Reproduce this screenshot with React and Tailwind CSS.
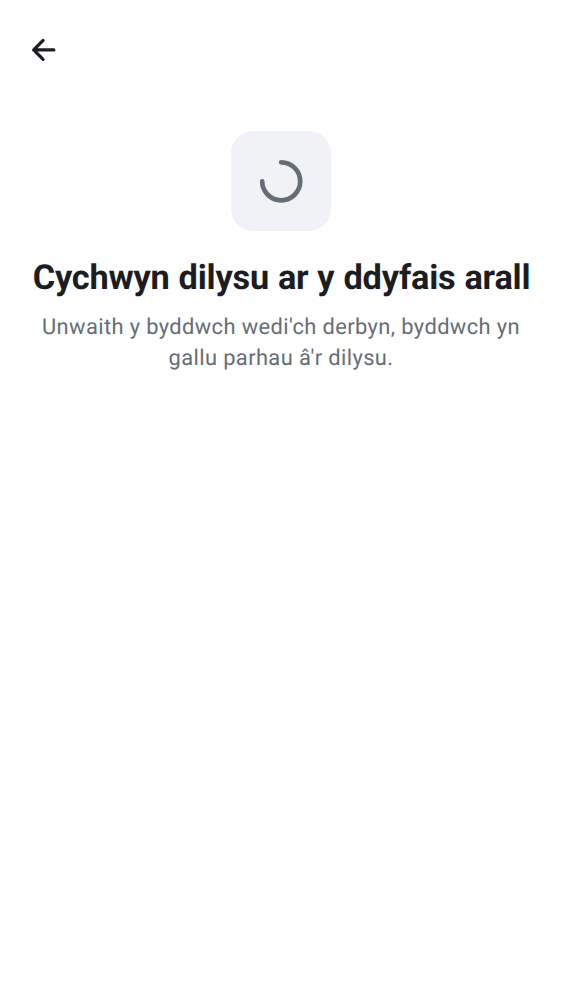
function BackIcon() {
  return (
    <svg
      className="h-[38px] w-[38px]"
      viewBox="0 0 38 38"
      fill="none"
      stroke="#1b1d22"
      strokeWidth="3.2"
      strokeLinecap="round"
      strokeLinejoin="round"
      aria-hidden="true"
    >
      <path d="M18.1 9.4 8.7 18.9l9.4 9.5M8.7 18.9h20.2" />
    </svg>
  );
}

function Spinner() {
  return (
    <svg className="h-[44px] w-[44px]" viewBox="0 0 44 44" fill="none" aria-hidden="true">
      <path d="M22.2 3.3A19 19 0 1 1 3.2 22.3" stroke="#656d77" strokeWidth="4.7" strokeLinecap="round" />
    </svg>
  );
}

export default function App() {
  return (
    <div className="flex min-h-[1000px] w-full flex-col bg-white font-['Roboto',sans-serif] [text-rendering:geometricPrecision]">
      <header className="flex h-[100px] items-center pl-[25px]">
        <button type="button" aria-label="Yn ôl">
          <BackIcon />
        </button>
      </header>
      <main className="flex flex-col items-center pt-[31px]">
        <div className="flex h-[100px] w-[100px] items-center justify-center rounded-[22px] bg-[#f0f2f5]">
          <Spinner />
        </div>
        <h1 className="mt-[25px] pl-[1px] text-center text-[34.34px] leading-[44px] font-bold tracking-[-0.2px] [word-spacing:0.6px] whitespace-nowrap text-[#1b1d22]">
          Cychwyn dilysu ar y ddyfais arall
        </h1>
        <p className="mt-[12px] w-[500px] text-center text-[21.86px] leading-[31px] tracking-[0.39px] text-[#656d77]">
          Unwaith y byddwch wedi'ch derbyn, byddwch yn gallu parhau â'r dilysu.
        </p>
      </main>
    </div>
  );
}
